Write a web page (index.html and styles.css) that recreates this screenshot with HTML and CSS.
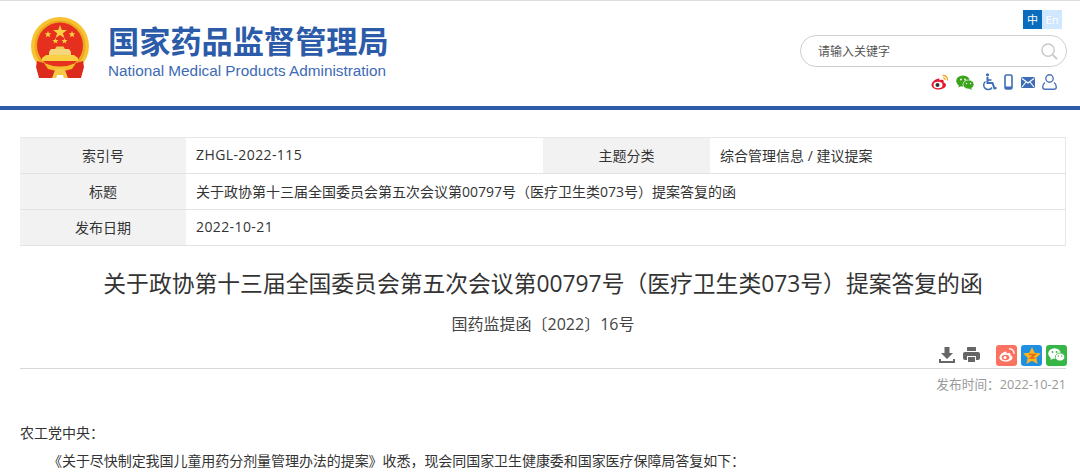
FILE: index.html
```html
<!DOCTYPE html>
<html lang="zh-CN">
<head>
<meta charset="utf-8">
<title>关于政协第十三届全国委员会第五次会议第00797号（医疗卫生类073号）提案答复的函</title>
<link rel="stylesheet" href="styles.css">
</head>
<body>
<header class="site-header">
  <div class="brand">
    <svg class="emblem" width="58" height="62" viewBox="0 0 58 62">
      <circle cx="29" cy="29" r="29" fill="#f7c332"/>
      <circle cx="29" cy="29" r="25.500" fill="#eda81f"/>
      <circle cx="29" cy="28.500" r="23" fill="#e6301f"/>
      <polygon points="29,8 30.800,13 36,13 31.800,16.200 33.400,21 29,18 24.600,21 26.200,16.200 22,13 27.200,13" fill="#f9d043"/>
      <polygon points="17,14 17.900,16.300 20.400,16.400 18.400,17.900 19.100,20.300 17,19 14.900,20.300 15.600,17.900 13.600,16.400 16.100,16.300" fill="#f9d043"/>
      <polygon points="41,14 41.900,16.300 44.400,16.400 42.400,17.900 43.100,20.300 41,19 38.900,20.300 39.600,17.900 37.600,16.400 40.100,16.300" fill="#f9d043"/>
      <polygon points="24.500,21 25.300,23 27.500,23.100 25.800,24.400 26.400,26.500 24.500,25.300 22.600,26.500 23.200,24.400 21.500,23.100 23.700,23" fill="#f9d043"/>
      <polygon points="33.500,21 34.300,23 36.500,23.100 34.800,24.400 35.400,26.500 33.500,25.300 31.600,26.500 32.200,24.400 30.500,23.100 32.700,23" fill="#f9d043"/>
      <path d="M24 32 L25.500 29.500 H32.500 L34 32 Z" fill="#f3c95a"/>
      <path d="M18 35 L20 32 H38 L40 35 V38 H18 Z" fill="#f6d67a"/>
      <path d="M11 41 L15 38 H43 L47 41 V44 H11 Z" fill="#f9d043"/>
      <path d="M6 44 L5 50 L8 61 H23 L26 50 Z" fill="#dc2a1c"/>
      <path d="M52 44 L53 50 L50 61 H35 L32 50 Z" fill="#dc2a1c"/>
      <path d="M13 46 Q29 53 45 46 L41 52 Q29 56 17 52 Z" fill="#f5bc2b"/>
      <path d="M24 53 Q29 50 34 53 L37 61 H33 L31 56 H27 L25 61 H21 Z" fill="#f7c94a"/>
    </svg>
    <div class="brand-text">
      <div class="brand-cn">国家药品监督管理局</div>
      <div class="brand-en">National Medical Products Administration</div>
    </div>
  </div>
  <div class="tools">
    <div class="lang"><span class="lang-cn">中</span><span class="lang-en">En</span></div>
    <div class="search">
      <span class="search-text">请输入关键字</span>
      <svg class="search-icon" width="17" height="17" viewBox="0 0 18 18" fill="none" stroke="#c9c9c9">
        <circle cx="7.500" cy="7.500" r="6.500" stroke-width="1.500"/>
        <path d="M12.500 12.500 L17 17" stroke-width="2"/>
      </svg>
    </div>
    <div class="quick-icons">
      <svg width="18" height="16" viewBox="0 0 18 16">
        <path d="M7.500 4.500C3.500 5.500 .5 8.500 .5 11c0 2.700 3.400 4.500 7 4.500 4.200 0 7.500-2.200 7.500-4.500 0-1.800-1.800-2.300-2.500-2.500.5-1.300.3-2.500-1-2.800-1-.2-2.500.2-3 .6C8.500 5 8.500 4.300 7.500 4.500Z" fill="#e6162d"/>
        <ellipse cx="7" cy="11" rx="4.500" ry="3.300" fill="#fff"/>
        <circle cx="6.500" cy="11" r="2" fill="#333"/>
        <path d="M11.500 1.500C14.500 1 17 3.500 16.500 6.500" fill="none" stroke="#f5a623" stroke-width="1.400"/>
        <path d="M12 4C13.300 3.800 14.200 4.700 14 6" fill="none" stroke="#f5a623" stroke-width="1.200"/>
      </svg>
      <svg width="18" height="15" viewBox="0 0 18 15">
        <ellipse cx="7" cy="6" rx="6.800" ry="5.500" fill="#3aa31b"/>
        <path d="M3 9.500 L2.500 12.500 L6 10.500 Z" fill="#3aa31b"/>
        <ellipse cx="12.500" cy="9.500" rx="5.500" ry="4.500" fill="#3aa31b" stroke="#fff" stroke-width=".7"/>
        <path d="M15 13 L16 15 L12.500 13.500 Z" fill="#3aa31b"/>
        <circle cx="5" cy="4.500" r=".9" fill="#fff"/><circle cx="9" cy="4.500" r=".9" fill="#fff"/>
        <circle cx="10.500" cy="8.500" r=".7" fill="#fff"/><circle cx="14.500" cy="8.500" r=".7" fill="#fff"/>
      </svg>
      <svg width="15" height="18" viewBox="0 0 15 18" fill="none" stroke="#3f6db5">
        <circle cx="5.500" cy="1.800" r="1.600" fill="#3f6db5" stroke="none"/>
        <path d="M5.500 4 V10 H10.500 L12.500 15.500 L14.500 14.800" stroke-width="2"/>
        <path d="M5.500 7 H9.500" stroke-width="1.600"/>
        <path d="M3.500 8.500 A4.500 4.500 0 1 0 10 14.500" stroke-width="1.500"/>
      </svg>
      <svg width="9" height="16" viewBox="0 0 9 16" fill="none">
        <rect x="1" y="1" width="7" height="14" rx="1.500" stroke="#3f6db5" stroke-width="1.600"/>
        <path d="M1 12.500 H8 V15 H1 Z" fill="#3f6db5"/>
      </svg>
      <svg width="14" height="11" viewBox="0 0 14 11">
        <rect width="14" height="11" rx="1.500" fill="#3f6db5"/>
        <path d="M1 1.500 L7 6 L13 1.500 M1 10 L5 5 M13 10 L9 5" stroke="#fff" stroke-width="1.100" fill="none"/>
      </svg>
      <svg width="15" height="16" viewBox="0 0 15 16" fill="none" stroke="#4a72b8" stroke-width="1.400">
        <circle cx="7.500" cy="4.500" r="3.700"/>
        <path d="M3 8.500 Q.7 10 .7 13 Q.7 15.200 3 15.200 H12 Q14.300 15.200 14.300 13 Q14.300 10 12 8.500"/>
      </svg>
    </div>
  </div>
</header>

<main class="content">
  <table class="meta">
    <tr>
      <th>索引号</th><td class="val-first wide">ZHGL-2022-115</td>
      <th class="label-second">主题分类</th><td>综合管理信息 / 建议提案</td>
    </tr>
    <tr>
      <th>标题</th><td colspan="3">关于政协第十三届全国委员会第五次会议第00797号（医疗卫生类073号）提案答复的函</td>
    </tr>
    <tr>
      <th>发布日期</th><td colspan="3" class="wide">2022-10-21</td>
    </tr>
  </table>

  <h1 class="title">关于政协第十三届全国委员会第五次会议第00797号（医疗卫生类073号）提案答复的函</h1>
  <p class="doc-no">国药监提函〔2022〕16号</p>

  <div class="actions">
    <svg width="16" height="16" viewBox="0 0 16 16" fill="#666">
      <path d="M5.500 0 H10.500 V6 H14 L8 12 L2 6 H5.500 Z"/>
      <path d="M0 12 H2 V14 H14 V12 H16 V16 H0 Z"/>
    </svg>
    <svg class="print" width="17" height="16" viewBox="0 0 17 16" fill="#666">
      <rect x="4" y="0" width="9" height="4" rx=".5"/>
      <rect x="0" y="5" width="17" height="8" rx="2"/>
      <rect x="4" y="9" width="9" height="7" fill="#fff"/>
      <rect x="5" y="10" width="7" height="5"/>
    </svg>
    <span class="share share-weibo">
      <svg width="16" height="14" viewBox="0 0 16 14">
        <path d="M6.500 3.500C3 4.500 .5 7 .5 9.500c0 2.500 3 4 6.500 4 3.800 0 6.500-2 6.500-4 0-1.500-1.500-2-2.200-2.200.5-1.200.2-2.200-1-2.400-.9-.1-2.200.2-2.700.6C7.500 4 7.500 3.300 6.500 3.500Z" fill="#fff"/>
        <ellipse cx="6.500" cy="9.500" rx="3.800" ry="2.700" fill="#fb7260"/>
        <circle cx="6" cy="9.500" r="1.500" fill="#fff"/>
        <path d="M10 1C13 .5 15.500 3 15 6" fill="none" stroke="#fff" stroke-width="1.300"/>
      </svg>
    </span>
    <span class="share share-qzone">
      <svg width="18" height="17" viewBox="0 0 18 17">
        <polygon points="9,0 11.600,5.800 18,6.500 13.200,10.700 14.600,17 9,13.700 3.400,17 4.800,10.700 0,6.500 6.400,5.800" fill="#f9b71d"/>
        <path d="M6 7.500 H12 L7.500 11 H12" fill="none" stroke="#e2631a" stroke-width="1.400"/>
      </svg>
    </span>
    <span class="share share-wechat">
      <svg width="17" height="14" viewBox="0 0 17 14">
        <ellipse cx="6.500" cy="5.500" rx="6.300" ry="5.200" fill="#fff"/>
        <path d="M3 9 L2.500 12 L6 10 Z" fill="#fff"/>
        <ellipse cx="12" cy="9" rx="4.800" ry="4" fill="#fff" stroke="#36b646" stroke-width=".8"/>
        <circle cx="4.500" cy="4" r=".9" fill="#36b646"/><circle cx="8.500" cy="4" r=".9" fill="#36b646"/>
        <circle cx="10.300" cy="8" r=".7" fill="#36b646"/><circle cx="13.700" cy="8" r=".7" fill="#36b646"/>
      </svg>
    </span>
  </div>
  <div class="pub-date">发布时间：2022-10-21</div>

  <div class="body-text">
    <p class="salute">农工党中央：</p>
    <p class="para">《关于尽快制定我国儿童用药分剂量管理办法的提案》收悉，现会同国家卫生健康委和国家医疗保障局答复如下：</p>
  </div>
</main>
</body>
</html>
```

FILE: styles.css
```css
* { box-sizing: border-box; }
html, body { margin: 0; padding: 0; height: 475px; overflow: hidden; background: #fff; }
body {
  font-family: "Open Sans", "Noto Sans CJK SC", sans-serif;
  color: #333;
  font-size: 14px;
}
.site-header {
  height: 110px;
  border-top: 1px solid #dedede;
  border-bottom: 4px solid #2b5ba9;
  display: flex;
  justify-content: space-between;
  padding: 0 13px 0 31px;
}
.brand { display: flex; align-items: flex-start; padding-top: 16px; }
.emblem { flex: none; }
.brand-text { margin-left: 19px; padding-top: 5px; width: 280px; }
.brand-cn {
  font-family: "Noto Sans CJK SC", sans-serif;
  font-weight: 700;
  font-size: 31.200px;
  line-height: 36px;
  color: #2b5ba9;
  white-space: nowrap;
}
.brand-en {
  font-family: "Liberation Sans", sans-serif;
  font-size: 15.300px;
  line-height: 18px;
  margin-top: 4px;
  color: #3d6ab5;
  white-space: nowrap;
}
.tools { width: 266px; display: flex; flex-direction: column; align-items: flex-end; padding-top: 9px; }
.lang { display: flex; height: 19px; margin-right: 5px; font-size: 11px; line-height: 19px; text-align: center; }
.lang-cn { width: 19px; background: #0a6cbc; color: #fff; font-family: "Noto Sans CJK SC", sans-serif; }
.lang-en { width: 20px; background: #cfe7ff; color: #fff; }
.search {
  width: 267px;
  height: 32px;
  margin-top: 6px;
  border: 1px solid #cfcfcf;
  border-radius: 16px;
  display: flex;
  align-items: center;
  justify-content: space-between;
  padding: 0 8px 0 17px;
}
.search-text { font-family: "Noto Sans CJK SC", sans-serif; font-size: 12px; color: #555; padding-bottom: 2px; }
.quick-icons { display: flex; align-items: center; gap: 7.500px; height: 20px; margin-top: 5px; margin-right: 10px; }

.content { padding: 0 14px 0 20px; }
.meta {
  width: 1046px;
  margin-top: 27px;
  border-collapse: collapse;
  table-layout: fixed;
  border-top: 1px solid #e8e8e8;
  border-right: 1px solid #e8e8e8;
}
.meta tr { height: 36px; }
.meta th, .meta td { padding: 0 0 2px; border-bottom: 1px solid #e3e3e3; font-size: 14px; font-weight: 400; }
.meta th { width: 166px; background: #f2f2f2; text-align: center; }
.meta .label-second { width: 167px; }
.meta td { padding-left: 10px; }
.meta .val-first { width: 357px; }
.meta .wide { letter-spacing: .4px; }
.title {
  margin: 23px 0 0 -20px;
  font-family: "Open Sans", "Noto Sans CJK SC", sans-serif;
  font-weight: 400;
  font-size: 22.800px;
  line-height: 30px;
  text-align: center;
  white-space: nowrap;
  width: 1086px;
}
.doc-no { margin: 13px 0 0; font-size: 16px; line-height: 24px; text-align: center; width: 1046px; color: #444; }
.actions {
  width: 1047px;
  display: flex;
  justify-content: flex-end;
  align-items: center;
  height: 22px;
  margin-top: 8px;
}
.print { margin-left: 8px; margin-right: 16px; }
.share { width: 21px; height: 21px; border-radius: 3px; display: flex; align-items: center; justify-content: center; margin-left: 4px; }
.share-weibo { background: #fb7260; margin-left: 0; }
.share-qzone { background: #1f8fe3; }
.share-wechat { background: #36b646; }
.pub-date {
  width: 1046px;
  border-top: 1px solid #d8d8d8;
  margin-top: 2px;
  padding-top: 6px;
  text-align: right;
  font-size: 12.700px;
  line-height: 18px;
  color: #999;
}
.body-text { margin-top: 26px; width: 1046px; font-size: 14px; line-height: 28px; }
.body-text p { margin: 0; }
.para { text-indent: 28px; letter-spacing: -.06px; }
```
